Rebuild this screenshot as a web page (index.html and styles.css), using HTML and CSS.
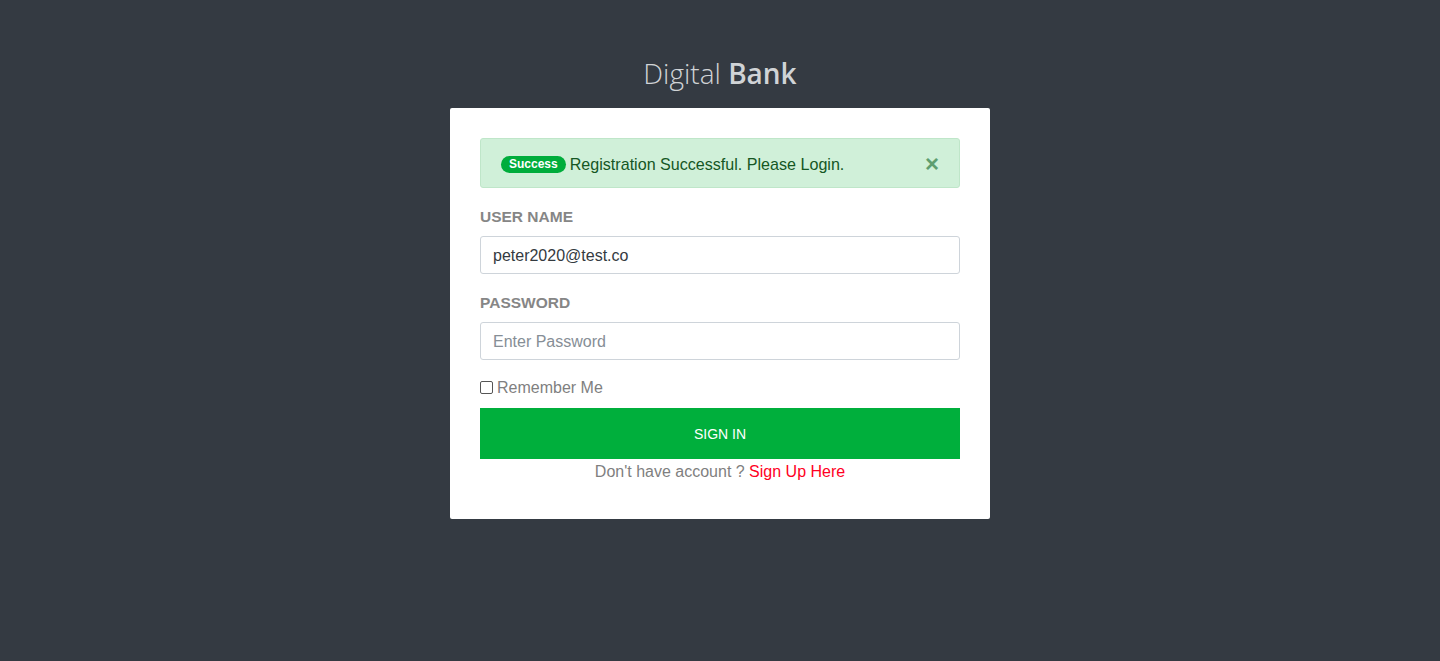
FILE: index.html
```html
<!DOCTYPE html>
<html>
<head>
<meta charset="utf-8">
<link rel="stylesheet" href="styles.css">
</head>
<body>
<div class="page">
  <h1 class="brand">Digital <strong>Bank</strong></h1>
  <div class="card">
    <div class="alert">
      <span class="badge">Success</span>
      <span class="alert-text">Registration Successful. Please Login.</span>
      <span class="close">&times;</span>
    </div>
    <label class="label">USER NAME</label>
    <div class="input filled">peter2020@test.co</div>
    <label class="label">PASSWORD</label>
    <div class="input placeholder">Enter Password</div>
    <div class="remember"><span class="checkbox"></span>Remember Me</div>
    <button class="btn">SIGN IN</button>
    <p class="signup">Don't have account ? <a class="link">Sign Up Here</a></p>
  </div>
</div>
</body>
</html>
```

FILE: styles.css
```css
html, body {
  margin: 0;
  padding: 0;
  background: #343a42;
  height: 100%;
}
body {
  font-family: "Liberation Sans", Arial, sans-serif;
}
.page {
  display: flex;
  flex-direction: column;
  align-items: center;
  padding-top: 54px;
}
.brand {
  margin: 0 0 16px;
  font-family: "Open Sans", sans-serif;
  font-weight: 300;
  font-size: 28px;
  line-height: 38px;
  color: #d0d3d6;
}
.brand strong {
  font-weight: 600;
}
.card {
  width: 540px;
  box-sizing: border-box;
  background: #fff;
  border-radius: 2px;
  padding: 30px 30px 38px;
  display: flex;
  flex-direction: column;
}
.alert {
  height: 50px;
  box-sizing: border-box;
  background: #d0f0d9;
  border: 1px solid #bfe6c9;
  border-radius: 3px;
  display: flex;
  align-items: center;
  padding: 2px 20px 0 20px;
  color: #155724;
  font-size: 16.1px;
}
.badge {
  background: #00ad3c;
  color: #fff;
  font-weight: bold;
  font-size: 12px;
  line-height: 17px;
  padding: 0 8px;
  border-radius: 9px;
  margin-right: 4px;
}
.alert-text {
  flex: 1;
}
.close {
  color: #5e9e70;
  font-weight: bold;
  font-size: 24px;
  line-height: 20px;
  margin-top: 0;
}
.label {
  font-weight: bold;
  font-size: 15.5px;
  color: #868686;
  margin-top: 20px;
  line-height: 18px;
}
.input {
  margin-top: 10px;
  height: 38px;
  box-sizing: border-box;
  border: 1px solid #ced4da;
  border-radius: 3px;
  padding: 1px 12px 0;
  display: flex;
  align-items: center;
  font-size: 16px;
}
.filled { color: #343a40; }
.placeholder { color: #868e96; }
.remember {
  margin-top: 19px;
  display: flex;
  align-items: center;
  font-size: 16px;
  color: #7f7f7f;
  line-height: 18px;
}
.checkbox {
  width: 11px;
  height: 11px;
  border: 1px solid #555;
  border-radius: 2px;
  margin-right: 4px;
  margin-top: -1px;
  background: #fff;
}
.btn {
  margin-top: 11px;
  height: 51px;
  border: none;
  background: #00af3c;
  color: #fff;
  font-family: "Liberation Sans", Arial, sans-serif;
  font-size: 14px;
  width: 100%;
}
.signup {
  margin: 4px 0 0;
  text-align: center;
  font-size: 16px;
  line-height: 18px;
  color: #7f7f7f;
}
.link {
  color: #ff0023;
}
```
